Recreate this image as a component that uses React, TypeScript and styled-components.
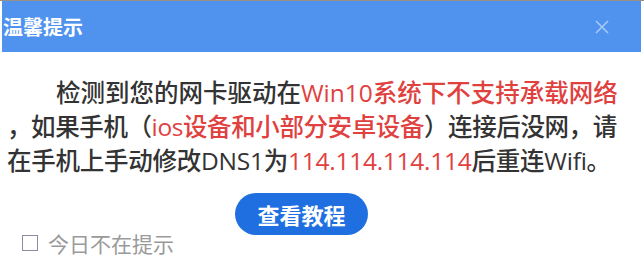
import styled, { createGlobalStyle } from 'styled-components';

const GlobalStyle = createGlobalStyle`
  html, body {
    margin: 0;
    padding: 0;
    background: #ffffff;
  }
`;

const Dialog = styled.div`
  width: 644px;
  height: 260px;
  background: #ffffff;
  display: flex;
  flex-direction: column;
  font-family: 'Open Sans', 'Noto Sans CJK SC', sans-serif;
  overflow: hidden;
  border-top: 1px solid #9a8f86;
  box-sizing: border-box;
`;

const TitleBar = styled.div`
  height: 51px;
  margin: 0 3px 0 2px;
  background: #4f93ee;
  display: flex;
  align-items: center;
  justify-content: space-between;
  padding: 0 30px 0 1px;
`;

const Title = styled.div`
  color: #ffffff;
  font-size: 20px;
  font-weight: 700;
  font-family: 'Noto Sans CJK SC', sans-serif;
`;

const CloseButton = styled.button`
  border: none;
  background: transparent;
  padding: 0;
  width: 18px;
  height: 18px;
  display: flex;
  align-items: center;
  justify-content: center;
  cursor: pointer;
`;

const Message = styled.div`
  margin: 24px 0 0 7px;
  font-size: 24.5px;
  line-height: 34px;
  color: #333333;
  white-space: nowrap;
  font-weight: 500;
`;

const Line = styled.div<{ $indent?: boolean; $spacing?: number }>`
  text-indent: ${(p) => (p.$indent ? '2em' : '0')};
  letter-spacing: ${(p) => p.$spacing ?? 0}px;
`;

const Red = styled.span`
  color: #e0413f;
`;

const Footer = styled.div`
  display: flex;
  flex-direction: column;
  padding-top: 15px;
`;

const GuideButton = styled.button`
  margin-left: 235px;
  width: 133px;
  height: 42px;
  border: none;
  border-radius: 21px;
  background: #1f6fe0;
  color: #ffffff;
  font-family: 'Noto Sans CJK SC', sans-serif;
  font-size: 22px;
  font-weight: 700;
  cursor: pointer;
  padding: 0;
`;

const CheckRow = styled.label`
  margin: -4px 0 0 22px;
  display: flex;
  align-items: center;
  gap: 10px;
  color: #9a9a9a;
  font-family: 'Noto Sans CJK SC', sans-serif;
  font-size: 21px;
  line-height: 24px;
  cursor: pointer;
`;

const Box = styled.span`
  width: 14px;
  height: 14px;
  border: 1px solid #8c8ca0;
  display: inline-block;
`;

export default function App() {
  return (
    <>
      <GlobalStyle />
      <Dialog>
        <TitleBar>
          <Title>温馨提示</Title>
          <CloseButton aria-label="关闭">
            <svg width="16" height="16" viewBox="0 0 16 16">
              <path d="M2 2 L14 14 M14 2 L2 14" stroke="#a8c9f3" strokeWidth="1.6" />
            </svg>
          </CloseButton>
        </TitleBar>
        <Message>
          <Line $indent>
            检测到您的网卡驱动在<Red>Win10系统下不支持承载网络</Red>
          </Line>
          <Line $spacing={-0.4}>
            ，如果手机（<Red>ios设备和小部分安卓设备</Red>）连接后没网，请
          </Line>
          <Line $spacing={-0.25}>
            在手机上手动修改DNS1为<Red>114.114.114.114</Red>后重连Wifi。
          </Line>
        </Message>
        <Footer>
          <GuideButton>查看教程</GuideButton>
          <CheckRow>
            <Box />
            今日不在提示
          </CheckRow>
        </Footer>
      </Dialog>
    </>
  );
}
